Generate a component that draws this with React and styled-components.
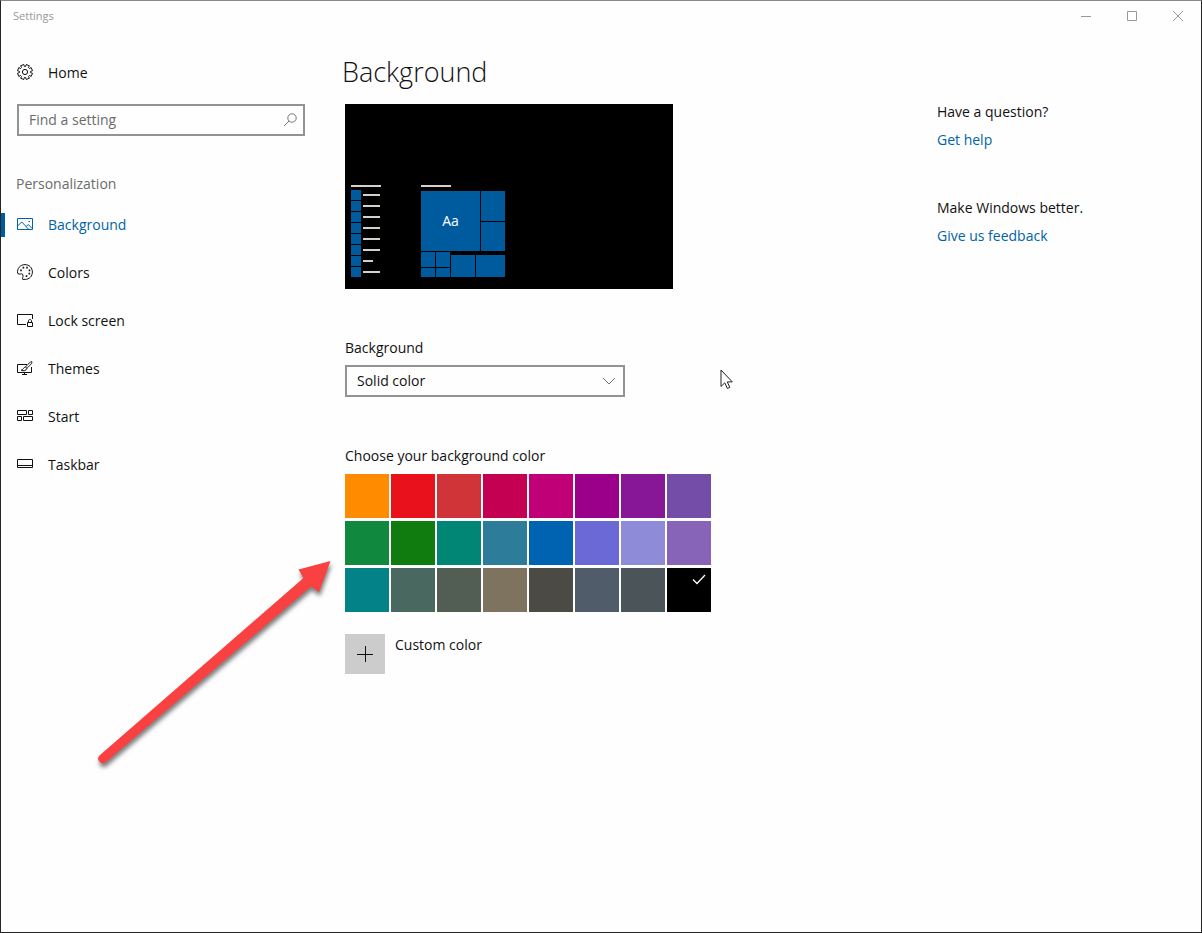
//-----------------------------------------------------------------------------
// Imports
//-----------------------------------------------------------------------------
import React, { useState } from 'react'
import styled, { createGlobalStyle } from 'styled-components'
//-----------------------------------------------------------------------------
// Config
//-----------------------------------------------------------------------------
const theme = {
  accent: '#005a9e',
  link: '#0063a6',
  text: '#111',
  muted: '#6b6b6b',
  border: '#939393'
}

const navItems = ['Background', 'Colors', 'Lock screen', 'Themes', 'Start', 'Taskbar']

const swatches = [
  '#ff8c00', '#e8111c', '#d13438', '#c30052', '#bf0077', '#9a0089', '#881798', '#744da9',
  '#10893e', '#107c10', '#018574', '#2d7d9a', '#0063b1', '#6b69d6', '#8e8cd8', '#8764b8',
  '#038387', '#486860', '#525e54', '#7e735f', '#4c4a44', '#515c6b', '#4a5459', '#000000'
]

const listLines = [17, 17, 17, 17, 17, 17, 10, 17]
//-----------------------------------------------------------------------------
// Icons
//-----------------------------------------------------------------------------
const gearPath = Array.from({ length: 8 }, (_, i) => {
  const point = (radius, offset) => {
    const angle = ((i * 45 + 22.5 + offset) * Math.PI) / 180
    return `${(8 + radius * Math.cos(angle)).toFixed(2)} ${(8 + radius * Math.sin(angle)).toFixed(2)}`
  }
  return `${i ? 'L' : 'M'}${point(5.6, -16)} L${point(7.6, -13)} L${point(7.6, 13)} L${point(5.6, 16)}`
}).join(' ') + ' Z'

const icons = {
  Home: (
    <>
      <path d={gearPath} />
      <circle cx="8" cy="8" r="2.6" />
    </>
  ),
  Background: (
    <>
      <path d="M.5 2.5h15v11H.5z" />
      <path d="M.8 9.8 4.8 6l6.8 7.2M9.2 10.5l2-2 4 4" />
      <path d="M11.5 5.5h1.5" />
    </>
  ),
  Colors: (
    <>
      <path d="M.7 9.4C-.3 4.600 3.200.6 8 .6c4.200 0 7.400 3.200 7.400 7.400S12.200 15.400 8.200 15.400H5.700C4.700 15 6.600 12.600 5.900 10.700 5 8.500 2.300 11.400.7 9.400z" />
      <path d="M3.200 6.400h1.600M5.600 3.600h1.600M9.200 3.600h1.600M11.700 6.400h1.600M11.500 9.700h1.600M8.700 12.200h1.600" strokeWidth="1.800" />
    </>
  ),
  'Lock screen': (
    <>
      <path d="M9 12.500H.5v-10h15V7" />
      <path d="M10.500 10.500h5v4h-5zM11.500 10.500V9c0-2 3-2 3 0v1.500" />
    </>
  ),
  Themes: (
    <>
      <path d="M10 4.500H.5v8h14V7M7.500 12.500v2M5 14.500h5" />
      <path d="M14.800 1.600c-1-.4-4.800 3.600-6.200 5.400l1.200 1.300c2-1.700 6-5.400 5-6.700zM8.500 7c-2 0-2 2.800-4.300 3.200 2.200 1.200 5.300.6 5.600-1.900" />
    </>
  ),
  Start: <path d="M.5 2.500h9v4h-9zM11.500 2.500h4v4h-4zM.5 8.500h4v4h-4zM6.500 8.500h9v4h-9z" />,
  Taskbar: <path d="M.5 3.500h15v8H.5zM.5 9.500h15" />,
  search: (
    <>
      <circle cx="10" cy="6" r="4.200" />
      <path d="M7 9 2 14" />
    </>
  ),
  chevron: <path d="m2 5 6 6 6-6" />,
  check: <path d="m2 8.500 4 4 8-8.500" strokeWidth="1.300" />,
  plus: <path d="M0 8.500h16M8.500 0v16" />,
  minimize: <path d="M3 7.500h10" />,
  maximize: <path d="M3.500 2.500h9v9h-9z" />,
  close: <path d="m3 2 10 10M13 2 3 12" />
}

const Icon = ({ name, size = 16 }) => (
  <IconSvg width={size} height={size} viewBox="0 0 16 16" aria-hidden="true">
    {icons[name]}
  </IconSvg>
)
//-----------------------------------------------------------------------------
// Components
//-----------------------------------------------------------------------------
const TitleBar = () => (
  <TitleBarContainer>
    <Title>Settings</Title>
    <div>
      <WindowButton aria-label="Minimize"><Icon name="minimize" /></WindowButton>
      <WindowButton aria-label="Maximize"><Icon name="maximize" /></WindowButton>
      <WindowButton aria-label="Close"><Icon name="close" /></WindowButton>
    </div>
  </TitleBarContainer>
)

const Sidebar = ({ active, setActive }) => (
  <SidebarContainer>
    <NavButton><Icon name="Home" />Home</NavButton>
    <SearchBox>
      <SearchInput type="text" placeholder="Find a setting" aria-label="Find a setting" />
      <Icon name="search" />
    </SearchBox>
    <Category>Personalization</Category>
    <nav>
      {navItems.map(item => (
        <NavButton key={item} $isActive={item === active} onClick={() => setActive(item)}>
          <Icon name={item} />{item}
        </NavButton>
      ))}
    </nav>
  </SidebarContainer>
)

const Preview = ({ color }) => (
  <PreviewContainer $color={color}>
    <div>
      <Line $width={30} />
      <AppList>
        {listLines.map((width, i) => (
          <AppRow key={i}>
            <Tile />
            <Line $width={width} />
          </AppRow>
        ))}
      </AppList>
    </div>
    <div>
      <Line $width={30} />
      <Tiles>
        <TopTiles>
          <BigTile>Aa</BigTile>
          <Tile />
          <Tile />
        </TopTiles>
        <BottomTiles>
          <SmallTiles>
            <Tile /><Tile /><Tile /><Tile />
          </SmallTiles>
          <Tile />
          <Tile />
        </BottomTiles>
      </Tiles>
    </div>
  </PreviewContainer>
)

const Arrow = () => (
  <ArrowSvg width="260" height="230" viewBox="0 0 260 230" aria-hidden="true">
    <path d="M250.500 11 218.500 19.500 223.500 28 19.500 205.500A4.600 4.600 0 0 0 26 212L231 36.500 239 42z" />
  </ArrowSvg>
)

const Pointer = () => (
  <PointerSvg width="14" height="21" viewBox="0 0 14 21" aria-hidden="true">
    <path d="M1 1v16.500l3.800-3.700 2.600 5.700 2.400-1.100-2.500-5.500h5z" />
  </PointerSvg>
)

export default function App() {
  const [active, setActive] = useState('Background')
  const [color, setColor] = useState('#000000')

  return (
    <Window>
      <GlobalStyle />
      <TitleBar />
      <Content>
        <Sidebar active={active} setActive={setActive} />
        <Main>
          <Heading>Background</Heading>
          <Preview color={color} />
          <Label htmlFor="background-type">Background</Label>
          <SelectBox>
            <Select id="background-type" defaultValue="solid">
              <option value="picture">Picture</option>
              <option value="solid">Solid color</option>
              <option value="slideshow">Slideshow</option>
            </Select>
            <Icon name="chevron" />
          </SelectBox>
          <Label as="h2" id="swatches">Choose your background color</Label>
          <SwatchGrid role="group" aria-labelledby="swatches">
            {swatches.map(swatch => (
              <Swatch
                key={swatch}
                $color={swatch}
                aria-label={swatch}
                aria-pressed={swatch === color}
                onClick={() => setColor(swatch)}>
                {swatch === color && <Icon name="check" />}
              </Swatch>
            ))}
          </SwatchGrid>
          <CustomColor>
            <PlusButton id="custom" aria-labelledby="custom-label"><Icon name="plus" /></PlusButton>
            <label id="custom-label" htmlFor="custom">Custom color</label>
          </CustomColor>
        </Main>
        <Aside>
          <HelpBlock>
            <p>Have a question?</p>
            <Link href="#help">Get help</Link>
          </HelpBlock>
          <HelpBlock>
            <p>Make Windows better.</p>
            <Link href="#feedback">Give us feedback</Link>
          </HelpBlock>
        </Aside>
      </Content>
      <Arrow />
      <Pointer />
    </Window>
  )
}
//-----------------------------------------------------------------------------
// Styled Components
//-----------------------------------------------------------------------------
const GlobalStyle = createGlobalStyle`
  *, *::before, *::after {
    box-sizing: border-box;
  }
  body {
    margin: 0;
    background: #fefefe;
    color: ${theme.text};
  }
  body, button, input, select {
    font-family: "Open Sans", "Noto Sans", sans-serif;
    font-size: 14px;
    line-height: 20px;
  }
  h1, h2, p {
    margin: 0;
    font-weight: 400;
  }
  button {
    border: 0;
    padding: 0;
    background: transparent;
    color: inherit;
  }
`

const Window = styled.div`
  position: relative;
  min-height: 100vh;
  border: 1px solid #252525;
  border-top-color: #8a8a8a;
`

const IconSvg = styled.svg`
  flex: none;
  fill: none;
  stroke: currentColor;
  stroke-width: 1;
`

const TitleBarContainer = styled.header`
  display: flex;
  justify-content: space-between;
  align-items: center;
  height: 30px;
  padding-left: 12px;
  color: #999;
`

const Title = styled.span`
  font-size: 11px;
`

const WindowButton = styled.button`
  width: 46px;
  height: 30px;
  svg {
    vertical-align: middle;
  }
`

const Content = styled.div`
  display: grid;
  grid-template-columns: 320px minmax(0, 1fr) 264px;
  padding-top: 17px;
`

const SidebarContainer = styled.aside`
  display: flex;
  flex-direction: column;
  padding-top: 1px;
`

const NavButton = styled.button`
  display: flex;
  align-items: center;
  gap: 15px;
  width: 100%;
  height: 48px;
  color: ${props => props.$isActive ? theme.link : 'inherit'};
  &::before {
    content: "";
    width: 4px;
    height: 24px;
    margin-right: -3px;
    background: ${props => props.$isActive ? theme.accent : 'transparent'};
  }
  svg {
    margin-bottom: 2px;
  }
`

const SearchBox = styled.div`
  display: flex;
  align-items: center;
  height: 32px;
  margin: 7px 16px 0;
  padding-right: 5px;
  border: 2px solid ${theme.border};
  color: #777;
`

const SearchInput = styled.input`
  flex: 1;
  min-width: 0;
  padding: 0 10px;
  border: 0;
  outline: 0;
  background: transparent;
  &::placeholder {
    color: ${theme.muted};
    opacity: 1;
  }
`

const Category = styled.h2`
  margin: 38px 0 7px;
  padding-left: 15px;
  font-size: 14px;
  color: ${theme.muted};
`

const Main = styled.main`
  padding: 0 24px;
`

const Heading = styled.h1`
  margin-left: -3px;
  font-size: 27px;
  font-weight: 300;
  line-height: 48px;
`

const PreviewContainer = styled.div`
  display: flex;
  align-items: flex-end;
  gap: 40px;
  max-width: 328px;
  height: 185px;
  margin: 8px 0 49px;
  padding: 0 6px 12px;
  background: ${props => props.$color};
`

const Line = styled.div`
  width: ${props => props.$width}px;
  height: 2px;
  background: #d4d0cc;
`

const Tile = styled.div`
  background: ${theme.accent};
`

const AppList = styled.div`
  display: grid;
  gap: 1px;
  margin-top: 3px;
`

const AppRow = styled.div`
  display: flex;
  align-items: center;
  gap: 2px;
  ${Tile} {
    width: 10px;
    height: 10px;
  }
`

const Tiles = styled.div`
  display: grid;
  gap: 1px;
  margin-top: 4px;
`

const TopTiles = styled.div`
  display: grid;
  grid-template-columns: 59px 24px;
  grid-template-rows: 30px 29px;
  gap: 1px;
`

const BigTile = styled(Tile)`
  grid-row: span 2;
  display: flex;
  align-items: center;
  justify-content: center;
  color: #fff;
`

const BottomTiles = styled.div`
  display: grid;
  grid-template-columns: 29px 24px 29px;
  align-items: end;
  gap: 1px;
  > ${Tile} {
    height: 22px;
  }
`

const SmallTiles = styled.div`
  display: grid;
  grid-template-columns: 14px 14px;
  grid-template-rows: 15px 9px;
  gap: 1px;
`

const Label = styled.label`
  display: block;
  margin-bottom: 7px;
  font-size: 14px;
`

const SelectBox = styled.div`
  display: grid;
  align-items: center;
  max-width: 280px;
  margin-bottom: 49px;
  > * {
    grid-area: 1 / 1;
  }
  svg {
    justify-self: end;
    margin-right: 8px;
    color: #777;
    pointer-events: none;
  }
`

const Select = styled.select`
  appearance: none;
  width: 100%;
  height: 32px;
  padding: 0 10px;
  border: 2px solid ${theme.border};
  border-radius: 0;
  background: transparent;
  color: ${theme.text};
`

const SwatchGrid = styled.div`
  display: grid;
  grid-template-columns: repeat(8, 44px);
  gap: 3px 2px;
  margin-top: 8px;
`

const Swatch = styled.button`
  display: flex;
  justify-content: flex-end;
  height: 44px;
  padding: 3px 4px;
  background: ${props => props.$color};
  color: #fff;
`

const CustomColor = styled.div`
  display: flex;
  gap: 10px;
  margin-top: 22px;
  line-height: 22px;
`

const PlusButton = styled.button`
  display: flex;
  align-items: center;
  justify-content: center;
  width: 40px;
  height: 40px;
  background: #ccc;
`

const Aside = styled.aside`
  display: flex;
  flex-direction: column;
  gap: 40px;
  padding-top: 50px;
`

const HelpBlock = styled.section`
  line-height: 28px;
`

const Link = styled.a`
  color: ${theme.link};
  text-decoration: none;
`

const ArrowSvg = styled.svg`
  position: absolute;
  left: 79px;
  top: 549px;
  fill: #f94141;
  filter: drop-shadow(1px 4px 2px rgba(0, 0, 0, 0.5));
  pointer-events: none;
`

const PointerSvg = styled.svg`
  position: absolute;
  left: 719px;
  top: 368px;
  fill: #fff;
  stroke: #222;
  pointer-events: none;
`
